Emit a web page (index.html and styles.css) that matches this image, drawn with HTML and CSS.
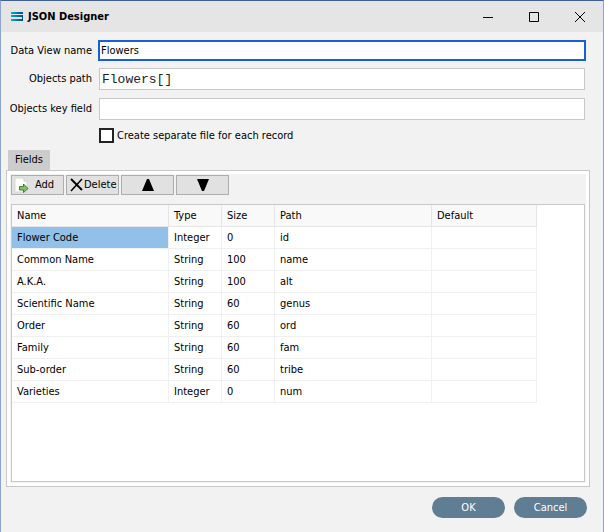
FILE: index.html
```html
<!DOCTYPE html>
<html lang="en">
<head>
<meta charset="utf-8">
<title>JSON Designer</title>
<link rel="stylesheet" href="styles.css">
</head>
<body>
<div class="window">
  <header class="titlebar">
    <svg class="logo" viewBox="0 0 12 9" aria-hidden="true">
      <defs><linearGradient id="g"><stop offset="0" stop-color="#00aadb"/><stop offset="1" stop-color="#004b8f"/></linearGradient></defs>
      <path d="M0 0h12v2H0zM0 3h12v1H0zM11 3h1v4h-1zM0 4h11v1H0zM0 7h12v2H0z" fill="url(#g)"/>
    </svg>
    <h1 class="title">JSON Designer</h1>
    <button class="caption" type="button" aria-label="Minimize"><svg viewBox="0 0 10 10"><path d="M0 5.5h10"/></svg></button>
    <button class="caption" type="button" aria-label="Maximize"><svg viewBox="0 0 10 10"><path d="M.5.5h9v9h-9z"/></svg></button>
    <button class="caption" type="button" aria-label="Close"><svg viewBox="0 0 10 10"><path d="M0 0l10 10M10 0L0 10"/></svg></button>
  </header>
  <form class="form">
    <div class="settings">
      <label for="view">Data View name</label>
      <input class="field focused" id="view" type="text" value="Flowers" autofocus>
      <label for="path">Objects path</label>
      <input class="field mono" id="path" type="text" value="Flowers[]">
      <label for="key">Objects key field</label>
      <input class="field" id="key" type="text">
      <div class="check"><input id="separate" type="checkbox"><label for="separate">Create separate file for each record</label></div>
    </div>
    <section class="tabs">
      <button class="tab" type="button">Fields</button>
      <div class="panel">
        <div class="content">
          <div class="toolbar">
            <button class="tool add" type="button">
              <svg class="add-icon" viewBox="0 0 15 16" aria-hidden="true"><path d="M1 1h9l3 3v11H1z" fill="#fff" stroke="#d4d9d4"/><path d="M10 1v3h3" fill="#eef1ee" stroke="#c4cac4"/><path d="M5.500 9.500h4v-2.500l4.500 4.500-4.500 4v-2.500h-4z" fill="#86bd68" stroke="#438033"/></svg>
              <span>Add</span></button>
            <button class="tool delete" type="button">
              <svg class="delete-icon" viewBox="0 0 14 14" aria-hidden="true"><path d="M1 1l11 11" stroke="#000" stroke-width="2"/><path d="M12 1L1 13" stroke="#000" stroke-width="1.500"/></svg>
              <span>Delete</span></button>
            <button class="tool" type="button" aria-label="Move up"><svg class="arrow" viewBox="0 0 12 12"><path d="M5 0h2l5 12H0z"/></svg></button>
            <button class="tool" type="button" aria-label="Move down"><svg class="arrow" viewBox="0 0 12 12"><path d="M0 0h12L7 12H5z"/></svg></button>
          </div>
          <div class="grid">
            <table>
              <colgroup><col class="c-name"><col class="c-short"><col class="c-short"><col class="c-name"><col class="c-default"></colgroup>
              <thead><tr><th>Name</th><th>Type</th><th>Size</th><th>Path</th><th>Default</th></tr></thead>
              <tbody>
                <tr><td class="selected">Flower Code</td><td>Integer</td><td>0</td><td>id</td><td></td></tr>
                <tr><td>Common Name</td><td>String</td><td>100</td><td>name</td><td></td></tr>
                <tr><td>A.K.A.</td><td>String</td><td>100</td><td>alt</td><td></td></tr>
                <tr><td>Scientific Name</td><td>String</td><td>60</td><td>genus</td><td></td></tr>
                <tr><td>Order</td><td>String</td><td>60</td><td>ord</td><td></td></tr>
                <tr><td>Family</td><td>String</td><td>60</td><td>fam</td><td></td></tr>
                <tr><td>Sub-order</td><td>String</td><td>60</td><td>tribe</td><td></td></tr>
                <tr><td>Varieties</td><td>Integer</td><td>0</td><td>num</td><td></td></tr>
              </tbody>
            </table>
          </div>
        </div>
      </div>
    </section>
    <footer class="actions">
      <button class="pill" type="submit">OK</button>
      <button class="pill" type="button">Cancel</button>
    </footer>
  </form>
</div>
</body>
</html>
```
FILE: styles.css
```css
* { box-sizing: border-box; }
body { margin: 0; background: #f2f2f2; color: #000; font: 11px/14px "DejaVu Sans Condensed", "Noto Sans", sans-serif; }
button, input { font: inherit; color: inherit; }
button { padding: 0; border: 0; }
.window { display: flex; flex-direction: column; min-height: 100vh; border: solid #8aa5d2; border-width: 1px 1px 0; border-top-color: #3f5f98; }
.titlebar { display: flex; align-items: center; height: 31px; padding-left: 10px; background: #e5e5e5; }
.logo { width: 12px; height: 9px; }
.title { flex: 1; margin: 0 0 0 5px; font-size: 11px; line-height: 14px; font-weight: bold; }
.caption { display: grid; place-items: center; width: 46px; height: 30px; background: none; }
.caption svg { width: 10px; height: 10px; fill: none; stroke: #000; }
.form { flex: 1; display: flex; flex-direction: column; }
.settings { display: grid; grid-template-columns: 91px 1fr; align-items: center; gap: 8px 7px; padding: 9px 18px 0 0; }
.settings > label { text-align: right; }
.field { width: 100%; height: 22px; padding: 0 2px; border: 1px solid #c8c8c8; border-radius: 0; background: #fff; outline: 0; }
.focused { height: 19px; border-color: #1a5fd8; box-shadow: 0 0 0 1px #1a5fd8; padding: 0 1px; }
.mono { font: 13px/18px "Liberation Mono", monospace; color: #222; }
.check { grid-column: 2; display: flex; align-items: center; gap: 3px; }
.check input { appearance: none; width: 15px; height: 15px; margin: 0; border: 2px solid #222; background: #fff; }
.tabs { flex: 1; display: flex; flex-direction: column; margin: 7px 13px 0 5px; }
.tab { align-self: flex-start; width: 42px; height: 20px; margin-left: 2px; background: #ccc; }
.panel { flex: 1; display: flex; padding: 3px; border: 1px solid #c8c8c8; background: #fff; }
.content { flex: 1; display: flex; flex-direction: column; gap: 9px; padding: 1px; background: #f2f2f2; }
.toolbar { display: flex; gap: 2px; }
.tool { display: flex; align-items: center; justify-content: center; width: 53px; height: 20px; border: 1px solid #adadad; background: #e1e1e1; }
.add { justify-content: flex-start; gap: 6px; padding-left: 2px; }
.delete { justify-content: flex-start; padding-left: 3px; }
.add-icon { width: 15px; height: 16px; }
.delete-icon { width: 14px; height: 14px; }
.arrow { width: 12px; height: 12px; }
.grid { flex: 1; border: 1px solid #c8c8c8; background: #fff; }
table { width: 525px; table-layout: fixed; border-collapse: separate; border-spacing: 0; }
.c-name { width: 157px; }
.c-short { width: 53px; }
.c-default { width: 105px; }
th, td { height: 22px; padding: 0 5px; border: solid #f0f0f0; border-width: 0 1px 1px 0; font-weight: normal; text-align: left; }
th { background: #f9f9f9; border-color: #e5e5e5; }
.selected { background: #91c0e8; }
.actions { display: flex; justify-content: flex-end; gap: 9px; padding: 10px 16px 14px; }
.pill { width: 73px; height: 21px; border-radius: 11px; background: #5f7e93; color: #fff; }
```
